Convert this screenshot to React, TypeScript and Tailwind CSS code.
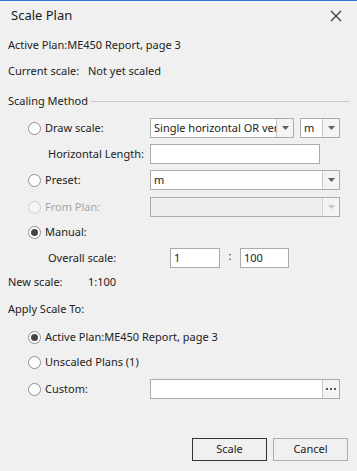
import { ReactNode } from "react";

const font = { fontFamily: '"Noto Sans", "Open Sans", sans-serif' };

function Radio({ checked = false, disabled = false }: { checked?: boolean; disabled?: boolean }) {
    return (
        <span
            className={`flex h-[13px] w-[13px] shrink-0 items-center justify-center rounded-full border ${
                disabled ? "border-[#d0d0d0] bg-[#f4f4f4]" : "border-[#8f8f8f] bg-white"
            }`}
        >
            {checked && <span className="h-[7px] w-[7px] rounded-full bg-[#444]" />}
        </span>
    );
}

function Arrow({ disabled = false }: { disabled?: boolean }) {
    return (
        <svg width="7" height="4" viewBox="0 0 7 4">
            <path d="M0 0h7L3.5 4z" fill={disabled ? "#c4c4c4" : "#606060"} />
        </svg>
    );
}

function Combo({
    value = "",
    width,
    disabled = false,
    btn = "arrow",
}: {
    value?: string;
    width: string;
    disabled?: boolean;
    btn?: "arrow" | "dots";
}) {
    return (
        <div
            className={`flex h-[20px] ${width} border border-[#ababab] ${
                disabled ? "bg-[#efefef]" : "bg-white"
            }`}
        >
            <span className="min-w-0 flex-1 overflow-hidden whitespace-nowrap pl-[3px] text-[11px] leading-[18px] text-[#222]">
                {value}
            </span>
            <span
                className={`flex w-[17px] shrink-0 items-center justify-center border-l ${
                    disabled ? "border-[#d4d4d4]" : "border-[#c8c8c8]"
                } bg-[#f4f4f4]`}
            >
                {btn === "arrow" ? (
                    <Arrow disabled={disabled} />
                ) : (
                    <span className="flex gap-[2px]">
                        <span className="h-[2px] w-[2px] bg-[#555]" />
                        <span className="h-[2px] w-[2px] bg-[#555]" />
                        <span className="h-[2px] w-[2px] bg-[#555]" />
                    </span>
                )}
            </span>
        </div>
    );
}

function Field({ value = "", width }: { value?: string; width: string }) {
    return (
        <div
            className={`h-[20px] ${width} border border-[#ababab] bg-white pl-[3px] text-[11px] leading-[18px] text-[#222]`}
        >
            {value}
        </div>
    );
}

function Line({ mt, children }: { mt: string; children: ReactNode }) {
    return <div className={`flex h-[20px] items-center whitespace-nowrap ${mt}`}>{children}</div>;
}

function RadioLabel({
    label,
    checked,
    disabled,
}: {
    label: string;
    checked?: boolean;
    disabled?: boolean;
}) {
    return (
        <div className="flex w-[142px] shrink-0 items-center pl-[20px]">
            <Radio checked={checked} disabled={disabled} />
            <span className={`ml-[4px] ${disabled ? "text-[#a6a6a6]" : ""}`}>{label}</span>
        </div>
    );
}

export default function App() {
    return (
        <div
            className="flex h-[471px] w-[357px] flex-col border-t border-[#2b7bd6] bg-[#f0f0f0] text-[11px] text-[#222]"
            style={font}
        >
            <div className="flex h-[29px] items-center justify-between pl-[11px] pr-[15px]">
                <span className="text-[13px] text-[#1a1a1a]">Scale Plan</span>
                <svg width="12" height="12" viewBox="0 0 12 12">
                    <path d="M1 1L11 11M11 1L1 11" stroke="#333" strokeWidth="1.1" />
                </svg>
            </div>

            <div className="flex flex-col px-[8px]">
                <Line mt="mt-[5px]">Active Plan:ME450 Report, page 3</Line>
                <Line mt="mt-[6px]">
                    <span className="w-[80px]">Current scale:</span>
                    <span>Not yet scaled</span>
                </Line>
                <Line mt="mt-[10px]">
                    <span>Scaling Method</span>
                    <span className="ml-[3px] h-px flex-1 bg-[#c8c8c8]" />
                </Line>

                <Line mt="mt-[7px]">
                    <RadioLabel label="Draw scale:" />
                    <Combo value="Single horizontal OR vertical" width="w-[144px]" />
                    <div className="ml-[6px]">
                        <Combo value="m" width="w-[40px]" />
                    </div>
                </Line>
                <Line mt="mt-[6px]">
                    <span className="w-[142px] shrink-0 pl-[40px]">Horizontal Length:</span>
                    <Field width="w-[170px]" />
                </Line>
                <Line mt="mt-[6px]">
                    <RadioLabel label="Preset:" />
                    <Combo value="m" width="w-[190px]" />
                </Line>
                <Line mt="mt-[7px]">
                    <RadioLabel label="From Plan:" disabled />
                    <Combo width="w-[190px]" disabled />
                </Line>
                <Line mt="mt-[5px]">
                    <RadioLabel label="Manual:" checked />
                </Line>
                <Line mt="mt-[6px]">
                    <span className="w-[162px] shrink-0 pl-[40px]">Overall scale:</span>
                    <Field value="1" width="w-[50px]" />
                    <span className="w-[20px] pb-[4px] text-center">:</span>
                    <Field value="100" width="w-[49px]" />
                </Line>
                <Line mt="mt-[4px]">
                    <span className="w-[80px]">New scale:</span>
                    <span>1:100</span>
                </Line>
                <Line mt="mt-[7px]">Apply Scale To:</Line>
                <Line mt="mt-[8px]">
                    <div className="flex items-center pl-[20px]">
                        <Radio checked />
                        <span className="ml-[4px]">Active Plan:ME450 Report, page 3</span>
                    </div>
                </Line>
                <Line mt="mt-[5px]">
                    <RadioLabel label="Unscaled Plans (1)" />
                </Line>
                <Line mt="mt-[7px]">
                    <RadioLabel label="Custom:" />
                    <Combo width="w-[190px]" btn="dots" />
                </Line>

                <div className="mt-[39px] flex justify-end gap-[6px] pr-[1px]">
                    <button className="h-[23px] w-[75px] border border-[#333] bg-[#f0f0f0] text-[11px] text-[#222]">
                        Scale
                    </button>
                    <button className="h-[23px] w-[75px] border border-[#adadad] bg-[#f0f0f0] text-[11px] text-[#222]">
                        Cancel
                    </button>
                </div>
            </div>
        </div>
    );
}
